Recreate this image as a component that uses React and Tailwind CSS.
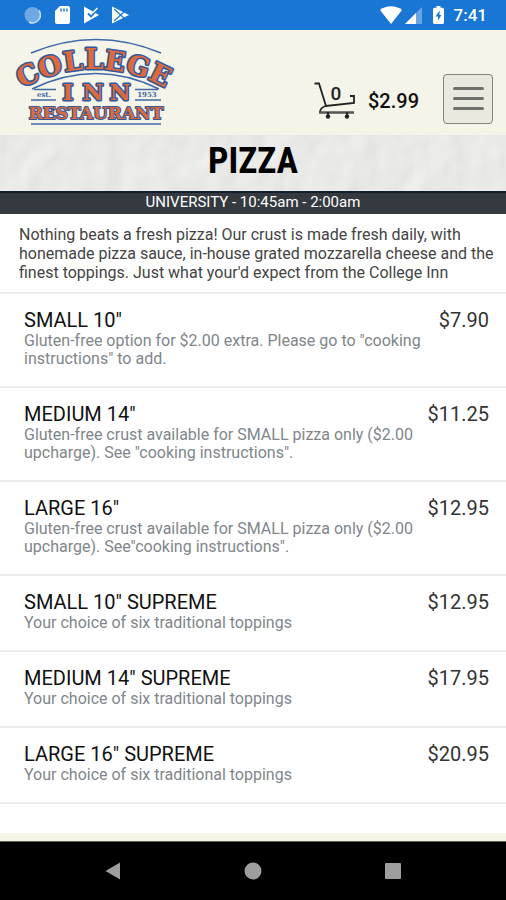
import { useState } from 'react';

const pizzas = [
  {
    id: 1,
    name: 'SMALL 10"',
    price: 7.9,
    description: 'Gluten-free option for $2.00 extra. Please go to "cooking instructions" to add.',
  },
  {
    id: 2,
    name: 'MEDIUM 14"',
    price: 11.25,
    description: 'Gluten-free crust available for SMALL pizza only ($2.00 upcharge). See "cooking instructions".',
  },
  {
    id: 3,
    name: 'LARGE 16"',
    price: 12.95,
    description: 'Gluten-free crust available for SMALL pizza only ($2.00 upcharge). See"cooking instructions".',
  },
  { id: 4, name: 'SMALL 10" SUPREME', price: 12.95, description: 'Your choice of six traditional toppings' },
  { id: 5, name: 'MEDIUM 14" SUPREME', price: 17.95, description: 'Your choice of six traditional toppings' },
  { id: 6, name: 'LARGE 16" SUPREME', price: 20.95, description: 'Your choice of six traditional toppings' },
];

// arched word of the logo: letter and its angle on the circle
const arch = [
  ['C', -26],
  ['O', -17],
  ['L', -8],
  ['L', 0],
  ['E', 8],
  ['G', 17],
  ['E', 26],
];

export default function App() {
  const [menuOpen, setMenuOpen] = useState(false);

  return (
    <div className="min-h-screen flex flex-col bg-white font-['Roboto',sans-serif]">
      <StatusBar />

      <header className="flex items-center justify-between bg-[#f4f4e8] pl-[14px] pr-[13px] pt-2 pb-2">
        <a href="#home" aria-label="College Inn Restaurant">
          <Logo />
        </a>
        <div className="flex items-center pt-8">
          <a href="#cart" className="flex items-center gap-3 mr-6 pt-1 text-[#111]">
            <CartIcon count={0} />
            <span className="text-[20px] leading-6 font-medium">$2.99</span>
          </a>
          <button
            type="button"
            aria-label="Menu"
            aria-expanded={menuOpen}
            onClick={() => setMenuOpen(!menuOpen)}
            className="w-[50px] h-[50px] flex flex-col items-center justify-center gap-[7px] rounded border border-[#85857f] bg-[#e9e9df]"
          >
            <span className="w-[31px] h-[3px] rounded-full bg-[#70706c]" />
            <span className="w-[31px] h-[3px] rounded-full bg-[#70706c]" />
            <span className="w-[31px] h-[3px] rounded-full bg-[#70706c]" />
          </button>
        </div>
      </header>

      <main className="flex-1">
        <div className="relative h-14 flex items-center justify-center overflow-hidden bg-[#e9e9e7]">
          <PaperTexture />
          <h1 className="relative text-[36px] leading-[48px] pb-1 font-bold text-black font-['Liberation_Sans_Narrow','Roboto_Condensed',sans-serif]">
            PIZZA
          </h1>
        </div>

        <p className="border-t-2 border-[#14202c] bg-[#343a40] pb-[3px] text-center text-[15px] leading-[18px] text-white">
          UNIVERSITY - 10:45am - 2:00am
        </p>

        <p className="border-b-2 border-[#ededed] pl-[19px] pr-2 pt-[11px] pb-[10px] text-base leading-[19px] text-[#444]">
          Nothing beats a fresh pizza! Our crust is made fresh daily, with honemade pizza sauce, in-house grated
          mozzarella cheese and the finest toppings. Just what your'd expect from the College Inn
        </p>

        <ul>
          {pizzas.map(pizza => (
            <li key={pizza.id} className="border-b-2 border-[#ededed]">
              <a href={`#pizza-${pizza.id}`} className="flex justify-between pl-6 pr-[17px] pt-[14px] pb-[18px]">
                <div className="flex-1 max-w-[400px]">
                  <h2 className="text-[20px] leading-6 text-[#111]">{pizza.name}</h2>
                  <p className="text-base leading-[18px] text-[#80868b]">{pizza.description}</p>
                </div>
                <span className="text-[20px] leading-6 text-[#333]">${pizza.price.toFixed(2)}</span>
              </a>
            </li>
          ))}
        </ul>
      </main>

      <div className="h-2 bg-[#f6f6e8]" />
      <NavBar />
    </div>
  );
}

function StatusBar() {
  return (
    <div className="h-[30px] flex items-center justify-between bg-[#1976d2] pl-6 pr-[19px] text-white">
      <div className="flex items-center gap-[13px]">
        <svg width="17" height="18" viewBox="0 0 17 18">
          <circle cx="8.5" cy="9" r="8" fill="#6fa9e4" />
          <path d="M5 16.2A8 8 0 0 0 15 4.5" fill="none" stroke="#c9dff5" strokeWidth="1.5" />
        </svg>
        <svg width="16" height="18" viewBox="0 0 16 18" fill="currentColor">
          <path d="M6 0h8a2 2 0 0 1 2 2v14a2 2 0 0 1-2 2H3a2 2 0 0 1-2-2V5z" />
          <path d="M7 2.5v3M10 2.5v3M13 2.5v3" stroke="#1976d2" strokeWidth="1.5" />
        </svg>
        <svg width="16" height="18" viewBox="0 0 16 18">
          <path d="M1 0.5L16 9 1 17.5z" fill="currentColor" />
          <path d="M5 7.500l3 3L15 3" fill="none" stroke="#1976d2" strokeWidth="1.800" />
          <path d="M10 6.500L14.500 2" stroke="currentColor" strokeWidth="1.500" />
        </svg>
        <svg width="17" height="18" viewBox="0 0 17 18">
          <path d="M0 0.5L17 9 0 17.5z" fill="currentColor" />
          <path d="M2 3l10 9M2 15l10-9" stroke="#1976d2" strokeWidth="1.2" />
        </svg>
      </div>
      <div className="flex items-center">
        <svg width="22" height="18" viewBox="0 0 22 18" fill="currentColor">
          <path d="M0 4C6-1 16-1 22 4L11 18z" />
        </svg>
        <svg width="17" height="17" viewBox="0 0 17 17" className="ml-[3px]">
          <path d="M17 0v17H0z" fill="#68a5e2" />
          <path d="M11 6v11H0z" fill="currentColor" />
        </svg>
        <svg width="11" height="18" viewBox="0 0 11 18" className="ml-[11px]">
          <path d="M3.5 0h4v1.8h2A1.5 1.5 0 0 1 11 3.3v13.2a1.5 1.5 0 0 1-1.5 1.5h-8A1.5 1.5 0 0 1 0 16.500V3.300a1.5 1.5 0 0 1 1.5-1.500h2z" fill="currentColor" />
          <path d="M6.5 4.5l-4 6H5v4L8.500 9h-2z" fill="#1976d2" />
        </svg>
        <span className="ml-[10px] text-[17px] leading-6 font-medium">7:41</span>
      </div>
    </div>
  );
}

function Logo() {
  return (
    <svg
      width="160"
      height="89"
      viewBox="0 0 160 89"
      overflow="visible"
      className="font-['DejaVu_Serif',serif] font-bold"
      textAnchor="middle"
    >
      <g fill="none" stroke="#3f68a8" strokeWidth="1.5">
        <path d="M17 15Q82-12 147 15" />
        <path d="M18 51Q82 20 145 51" />
        <path d="M20 51.5H42M121 51.5H144M17 62H42M121 62H147M17 86H147" />
      </g>
      <g fill="#dd6a3c" stroke="#31589b" strokeWidth="3" strokeLinejoin="round" paintOrder="stroke">
        {arch.map(([letter, angle], i) => (
          <text key={i} x="80" y="31" fontSize="27" transform={`rotate(${angle} 80 173)`}>
            {letter}
          </text>
        ))}
        <text x="54" y="62" fontSize="23">I</text>
        <text x="79" y="62" fontSize="23">N</text>
        <text x="106" y="62" fontSize="23">N</text>
        <text x="82" y="81" fontSize="17" strokeWidth="2">RESTAURANT</text>
      </g>
      <g fill="#3f68a8" fontSize="7">
        <text x="30" y="59">est.</text>
        <text x="133" y="59">1953</text>
      </g>
    </svg>
  );
}

function CartIcon({ count }) {
  return (
    <svg width="42" height="38" viewBox="0 0 42 38" fill="none" stroke="#222" strokeWidth="1.8">
      <path d="M0.5 1.5H5L12 24l28-3V14h-4" />
      <path d="M12 24c-4 1-6 3-6 6.5" />
      <path d="M5 30.5H40" stroke="#555" strokeWidth="2.5" />
      <path d="M14 30v3M33 30v3" />
      <circle cx="14" cy="34.5" r="2.2" fill="#222" stroke="none" />
      <circle cx="33" cy="34.5" r="2.2" fill="#222" stroke="none" />
      <text x="22" y="18" fontSize="19" fontWeight="500" textAnchor="middle" fill="#222" stroke="none">
        {count}
      </text>
    </svg>
  );
}

// embossed paper behind the page title
function PaperTexture() {
  return (
    <svg className="absolute inset-0 w-full h-full opacity-30" aria-hidden="true">
      <filter id="paper" x="0" y="0" width="100%" height="100%" colorInterpolationFilters="sRGB">
        <feTurbulence type="fractalNoise" baseFrequency="0.035 0.03" numOctaves="2" seed="4" />
        <feDiffuseLighting lightingColor="#f2f2f0" surfaceScale="2" diffuseConstant="1.1">
          <feDistantLight azimuth="215" elevation="62" />
        </feDiffuseLighting>
      </filter>
      <rect width="100%" height="100%" filter="url(#paper)" />
    </svg>
  );
}

function NavBar() {
  return (
    <nav className="h-[59px] flex items-center justify-center gap-[107px] border-t border-[#5c5c58] bg-black text-[#9e9e9e]">
      <button type="button" aria-label="Back" className="w-[33px] flex justify-center">
        <svg width="16" height="18" viewBox="0 0 16 18" fill="currentColor">
          <path d="M15 0.5v17L0.5 9z" />
        </svg>
      </button>
      <button type="button" aria-label="Home" className="w-[33px] flex justify-center">
        <svg width="18" height="18" viewBox="0 0 18 18" fill="currentColor">
          <circle cx="9" cy="9" r="8.5" />
        </svg>
      </button>
      <button type="button" aria-label="Recent apps" className="w-[33px] flex justify-center">
        <svg width="16" height="16" viewBox="0 0 16 16" fill="currentColor">
          <rect width="16" height="16" rx="1" />
        </svg>
      </button>
    </nav>
  );
}
